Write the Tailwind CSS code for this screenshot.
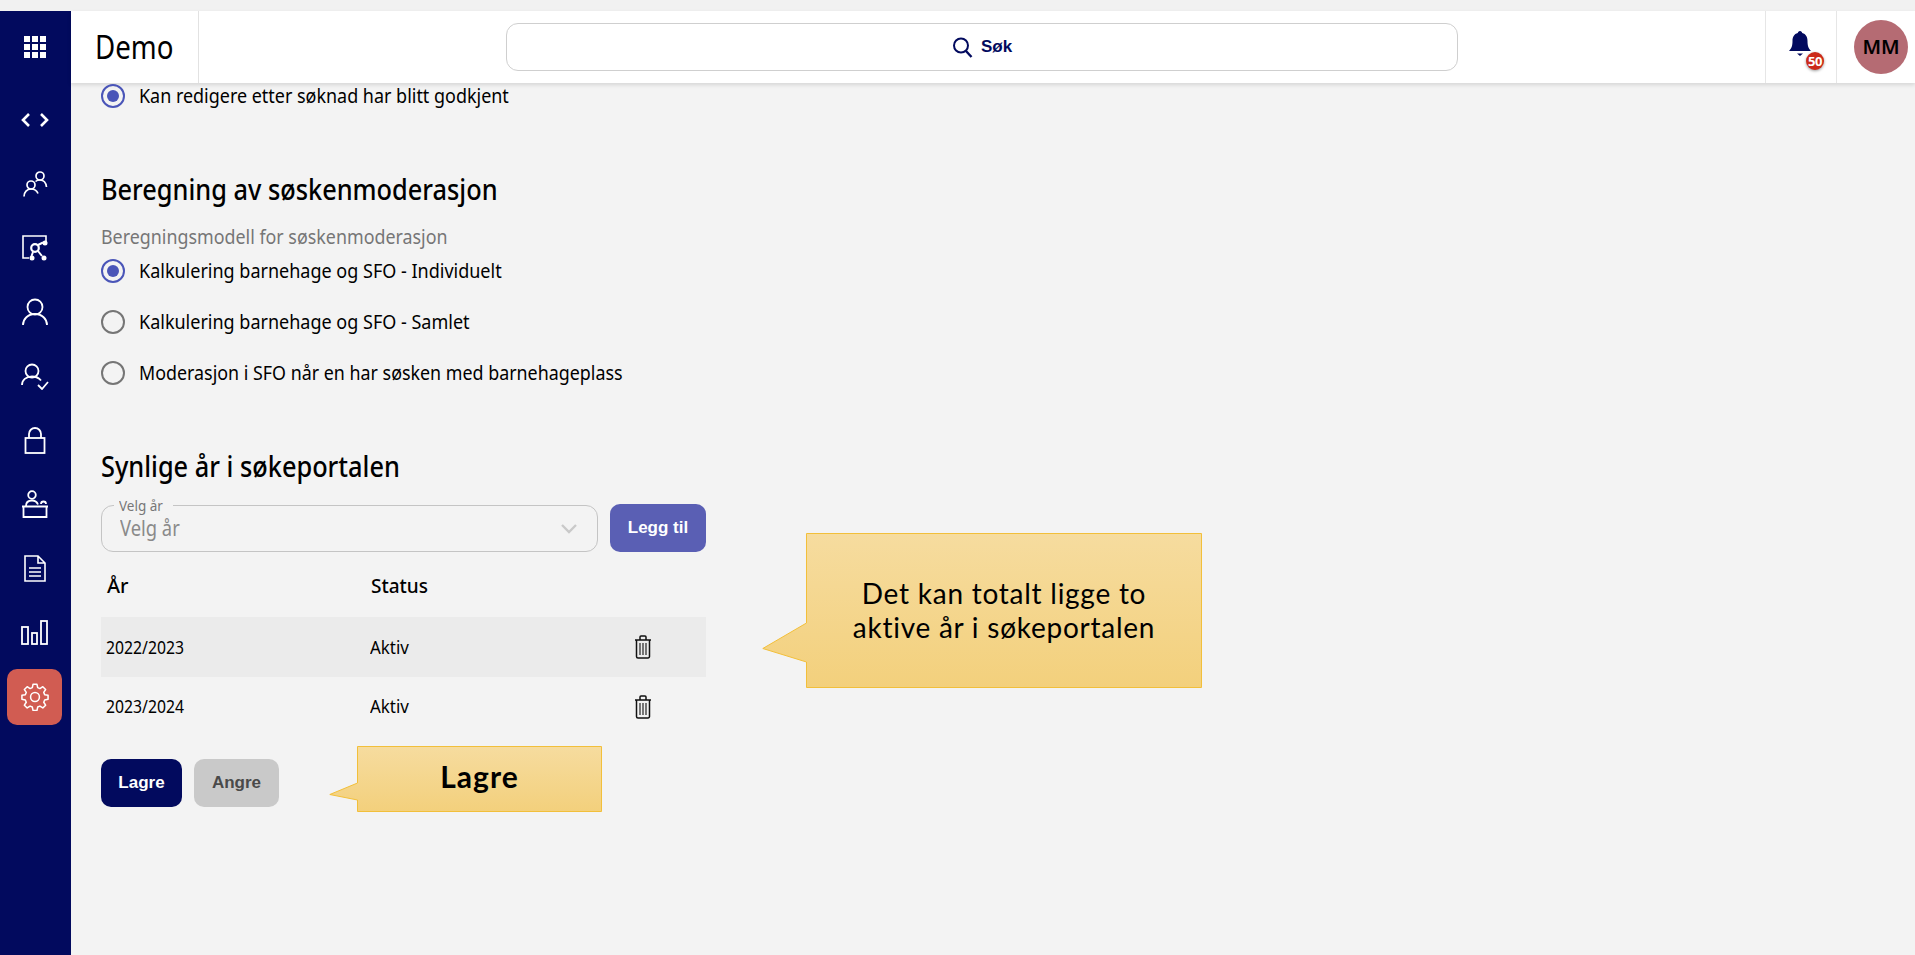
<!DOCTYPE html>
<html lang="no">
<head>
<meta charset="utf-8">
<title>Demo</title>
<script src="https://cdn.jsdelivr.net/npm/@tailwindcss/browser@4"></script>
</head>
<body class="h-[955px] w-[1915px] overflow-hidden bg-[#f3f3f3] font-['Noto_Sans',sans-serif] text-black">
<div class="h-[11px] bg-[#f1f1f1]"></div>
<div class="flex h-[944px]">
  <aside class="flex w-[71px] shrink-0 flex-col items-start bg-[#020a5e] pl-[7px] text-white">
    <div class="flex h-[72px] w-[55px] items-center justify-center">
      <svg width="24" height="24" viewBox="0 0 24 24" fill="#fff"><rect x="1" y="1" width="6" height="6"/><rect x="9" y="1" width="6" height="6"/><rect x="17" y="1" width="6" height="6"/><rect x="1" y="9" width="6" height="6"/><rect x="9" y="9" width="6" height="6"/><rect x="17" y="9" width="6" height="6"/><rect x="1" y="17" width="6" height="6"/><rect x="9" y="17" width="6" height="6"/><rect x="17" y="17" width="6" height="6"/></svg>
    </div>
    <nav class="mt-[5px] flex flex-col items-center">
      <div class="flex h-16 w-[55px] items-center justify-center">
        <svg width="28" height="16" viewBox="0 0 28 16" fill="none" stroke="#fff" stroke-width="2.6"><path d="M8 2 2 8l6 6M20 2l6 6-6 6"/></svg>
      </div>
      <div class="flex h-16 w-[55px] items-center justify-center">
        <svg width="26" height="26" viewBox="0 0 26 26" fill="none" stroke="#fff" stroke-width="1.7"><circle cx="9" cy="14" r="4"/><path d="M2 25.500c0-4.500 3-7.500 7-7.500s6 2 7 4.500"/><circle cx="18" cy="5" r="4"/><path d="M13.500 10.500c1-1 2.500-1.500 4.500-1.500 4 0 6 3 6.500 7"/></svg>
      </div>
      <div class="flex h-16 w-[55px] items-center justify-center">
        <svg width="26" height="26" viewBox="0 0 26 26" fill="none" stroke="#fff" stroke-width="1.6"><path d="M7 23H1V1h23v6"/><circle cx="13" cy="13" r="3.800" stroke-width="2.200"/><path d="m16 10 5-2.500M16 16l4 5M11 17l-1.500 4" stroke-width="2"/><circle cx="23" cy="8" r="2.500" fill="#fff" stroke="none"/><circle cx="22" cy="23" r="2.500" fill="#fff" stroke="none"/><circle cx="10" cy="23" r="2.500" fill="#fff" stroke="none"/></svg>
      </div>
      <div class="flex h-16 w-[55px] items-center justify-center">
        <svg width="26" height="28" viewBox="0 0 26 28" fill="none" stroke="#fff" stroke-width="1.800"><circle cx="13" cy="9" r="7.500"/><path d="M1 27c0-6 5-11 12-11s12 5 12 11"/></svg>
      </div>
      <div class="flex h-16 w-[55px] items-center justify-center">
        <svg width="28" height="27" viewBox="0 0 28 27" fill="none" stroke="#fff" stroke-width="1.800"><circle cx="11" cy="8" r="6.500"/><path d="M1 22c0-5 4-8.500 10-8.500 4 0 7 1.500 9 4"/><path d="m17 22 4 4 6-7"/></svg>
      </div>
      <div class="flex h-16 w-[55px] items-center justify-center">
        <svg width="22" height="27" viewBox="0 0 22 27" fill="none" stroke="#fff" stroke-width="1.800"><rect x="1.500" y="11" width="19" height="15"/><path d="M5 11V7a6 6 0 0 1 12 0v4"/></svg>
      </div>
      <div class="flex h-16 w-[55px] items-center justify-center">
        <svg width="28" height="28" viewBox="0 0 28 28" fill="none" stroke="#fff" stroke-width="1.800"><circle cx="11" cy="5" r="3.800"/><path d="M5 16c0-3.500 2.500-5.500 6-5.500 3 0 5 1.500 6 4"/><path d="M20 14a2.500 2.500 0 0 1 5 0"/><path d="M1 16.500h26M2.500 16.500V27h23V16.500"/></svg>
      </div>
      <div class="flex h-16 w-[55px] items-center justify-center">
        <svg width="22" height="27" viewBox="0 0 22 27" fill="none" stroke="#fff" stroke-width="1.600"><path d="M1 1h13l7 7v18H1zM14 1v7h7"/><path d="M5 13h12M5 17h12M5 21h12"/></svg>
      </div>
      <div class="flex h-16 w-[55px] items-center justify-center">
        <svg width="27" height="25" viewBox="0 0 27 25" fill="none" stroke="#fff" stroke-width="1.800"><rect x="1" y="7" width="6" height="17"/><rect x="11" y="13" width="5" height="11"/><rect x="20" y="1" width="6" height="23"/></svg>
      </div>
      <div class="mt-[5px] flex h-14 w-[55px] items-center justify-center rounded-[10px] bg-[#d15c52]">
        <svg width="28" height="28" viewBox="0 0 24 24" fill="none" stroke="#fff" stroke-width="1.300" stroke-linejoin="round"><path d="M10.300 1.800h3.400l.6 2.900 1.900.8 2.500-1.600 2.400 2.400-1.600 2.500.8 1.900 2.900.6v3.400l-2.900.6-.8 1.900 1.600 2.500-2.400 2.400-2.500-1.600-1.900.8-.6 2.900h-3.400l-.6-2.900-1.900-.8-2.500 1.600-2.400-2.400 1.600-2.500-.8-1.900-2.900-.6v-3.400l2.900-.6.8-1.900-1.600-2.500 2.400-2.400 2.500 1.600 1.900-.8z" transform="translate(0 -.7)"/><circle cx="12" cy="12" r="3.800"/></svg>
      </div>
    </nav>
  </aside>
  <main class="relative min-w-0 flex-1">
    <header class="flex h-[72px] items-stretch bg-white shadow-[0_2px_4px_rgba(0,0,0,0.12)]">
      <div class="flex w-[128px] shrink-0 items-center border-r border-[#e2e2e2] pl-[24px] text-[32px] leading-none"><span class="origin-left scale-x-[0.865]">Demo</span></div>
      <div class="flex min-w-0 flex-1 items-center pl-[307px]">
        <div class="flex h-[48px] w-[952px] shrink-0 items-center justify-center gap-2 rounded-[12px] border border-[#cfcfcf] bg-white font-['Liberation_Sans',sans-serif] text-[17px] font-bold text-[#020a5e]">
          <svg width="21" height="21" viewBox="0 0 21 21" fill="none" stroke="#020a5e" stroke-width="2"><circle cx="9" cy="8.500" r="7"/><path d="m14 14 5.500 6" stroke-width="2.400"/></svg>
          <span>Søk</span>
        </div>
      </div>
      <div class="relative flex w-[72px] shrink-0 items-center justify-center border-x border-[#e6e6e6]">
        <svg class="mb-[4px] mr-[2px]" width="22" height="28" viewBox="0 0 22 28" fill="#020a5e"><path d="M11 0c1.400 0 2 1 2.200 2C17 3 18.500 6 18.500 10c0 5 1 7.500 3.500 10H0c2.500-2.500 3.500-5 3.500-10C3.500 6 5 3 8.800 2 9 1 9.600 0 11 0z"/><path d="M8 22.500h6L11 25z"/></svg>
        <span class="absolute left-[40px] top-[41px] flex h-[18px] w-[18px] items-center justify-center rounded-full bg-[#cc2a1a] text-[13px] font-bold leading-none tracking-[-0.5px] text-white shadow-[0_1px_3px_rgba(0,0,0,0.4)]">50</span>
      </div>
      <div class="flex w-[78px] shrink-0 items-center pl-[17px]">
        <div class="flex h-[54px] w-[54px] items-center justify-center rounded-full bg-[#b56b73] text-[20px] font-semibold">MM</div>
      </div>
    </header>
    <div class="pl-[30px] pt-[1px]">
      <label class="flex h-[24px] items-center gap-[14px] text-[20px]">
        <span class="flex h-6 w-6 items-center justify-center rounded-full border-2 border-[#4a55b8]"><span class="h-3 w-3 rounded-full bg-[#4a55b8]"></span></span>
        <span class="origin-left scale-x-[0.897]">Kan redigere etter søknad har blitt godkjent</span>
      </label>
      <h2 class="mt-[61px] h-[40px] origin-left scale-x-[0.905] text-[28px] font-medium leading-[40px]">Beregning av søskenmoderasjon</h2>
      <p class="mt-[16px] h-[24px] origin-left scale-x-[0.893] text-[20px] leading-[24px] text-[#767676]">Beregningsmodell for søskenmoderasjon</p>
      <div class="mt-[10px] flex flex-col gap-[27px]">
        <label class="flex h-[24px] items-center gap-[14px] text-[20px]">
          <span class="flex h-6 w-6 items-center justify-center rounded-full border-2 border-[#4a55b8]"><span class="h-3 w-3 rounded-full bg-[#4a55b8]"></span></span>
          <span class="origin-left scale-x-90">Kalkulering barnehage og SFO - Individuelt</span>
        </label>
        <label class="flex h-[24px] items-center gap-[14px] text-[20px]">
          <span class="h-6 w-6 rounded-full border-2 border-[#757575]"></span>
          <span class="origin-left scale-x-90">Kalkulering barnehage og SFO - Samlet</span>
        </label>
        <label class="flex h-[24px] items-center gap-[14px] text-[20px]">
          <span class="h-6 w-6 rounded-full border-2 border-[#757575]"></span>
          <span class="origin-left scale-x-[0.893]">Moderasjon i SFO når en har søsken med barnehageplass</span>
        </label>
      </div>
      <h2 class="mt-[61px] h-[40px] origin-left scale-x-[0.905] text-[28px] font-medium leading-[40px]">Synlige år i søkeportalen</h2>
      <div class="mt-[17px] flex w-[605px] items-start gap-[12px]">
        <div class="relative mt-[2px] flex h-[47px] flex-1 items-center justify-between rounded-[12px] border border-[#c4c4c4] pl-[18px] pr-[20px]">
          <span class="absolute -top-[10px] left-[12px] bg-[#f3f3f3] px-[5px] text-[15px] leading-[18px] text-[#777]"><span class="inline-block origin-left scale-x-90">Velg år</span></span>
          <span class="origin-left scale-x-[0.875] text-[21px] text-[#8a8a8a]">Velg år</span>
          <svg width="16" height="10" viewBox="0 0 16 10" fill="none" stroke="#c9c9c9" stroke-width="2.400"><path d="m1 1 7 7 7-7"/></svg>
        </div>
        <button class="mt-[1px] flex h-[48px] w-[96px] items-center justify-center rounded-[10px] bg-[#5a5fb4] font-['Liberation_Sans',sans-serif] text-[17px] font-bold text-white">Legg til</button>
      </div>
      <div class="mt-[3px] w-[605px]">
        <div class="grid h-[62px] grid-cols-[264px_1fr_72px] items-center pl-[6px] text-[20px] font-medium">
          <span>År</span><span class="origin-left scale-x-95">Status</span><span></span>
        </div>
        <div class="grid h-[60px] grid-cols-[264px_1fr_72px] items-center bg-[#ebebeb] pl-[5px] text-[18px]">
          <span class="origin-left scale-x-[0.875]">2022/2023</span><span class="origin-left scale-x-[0.94]">Aktiv</span>
          <svg width="18" height="24" viewBox="0 0 18 24" fill="none" stroke="#111" stroke-width="1.500"><path d="M1 5h16M6 5V2a1 1 0 0 1 1-1h4a1 1 0 0 1 1 1v3"/><path d="M2.500 5v16.500a1.500 1.500 0 0 0 1.500 1.500h10a1.500 1.500 0 0 0 1.500-1.500V5"/><path d="M6 8v12M9 8v12M12 8v12" stroke-width="1.100"/></svg>
        </div>
        <div class="grid h-[59px] grid-cols-[264px_1fr_72px] items-center pl-[5px] text-[18px]">
          <span class="origin-left scale-x-[0.875]">2023/2024</span><span class="origin-left scale-x-[0.94]">Aktiv</span>
          <svg width="18" height="24" viewBox="0 0 18 24" fill="none" stroke="#111" stroke-width="1.500"><path d="M1 5h16M6 5V2a1 1 0 0 1 1-1h4a1 1 0 0 1 1 1v3"/><path d="M2.500 5v16.500a1.500 1.500 0 0 0 1.500 1.500h10a1.500 1.500 0 0 0 1.500-1.500V5"/><path d="M6 8v12M9 8v12M12 8v12" stroke-width="1.100"/></svg>
        </div>
      </div>
      <div class="mt-[23px] flex gap-[12px] font-['Liberation_Sans',sans-serif] text-[17px] font-bold">
        <button class="flex h-[48px] w-[81px] items-center justify-center rounded-[10px] bg-[#020a5e] text-white">Lagre</button>
        <button class="flex h-[48px] w-[85px] items-center justify-center rounded-[10px] bg-[#c9c9c9] text-[#4a4a4a]">Angre</button>
      </div>
    </div>
    <!-- callouts lying over the page -->
    <div class="absolute left-[691px] top-[522px] h-[155px] w-[440px]">
      <svg class="absolute inset-0" width="440" height="155" viewBox="0 0 440 155"><defs><linearGradient id="a" x1="0" y1="0" x2="0" y2="1"><stop offset="0" stop-color="#f6dc9f"/><stop offset="1" stop-color="#f3d07c"/></linearGradient></defs><path d="M44.500.5h395v154h-395V129L.8 115.500 44.500 90z" fill="url(#a)" stroke="#f2bf3a"/></svg>
      <div class="absolute left-[44px] right-0 top-[43px] text-center font-['Lato',sans-serif] text-[28px] leading-[34px] tracking-[0.75px]">Det kan totalt ligge to<br>aktive år i søkeportalen</div>
    </div>
    <div class="absolute left-[258px] top-[735px] h-[66px] w-[273px]">
      <svg class="absolute inset-0" width="273" height="66" viewBox="0 0 273 66"><defs><linearGradient id="b" x1="0" y1="0" x2="0" y2="1"><stop offset="0" stop-color="#f6dc9f"/><stop offset="1" stop-color="#f3d07c"/></linearGradient></defs><path d="M28.500.5h244v65h-244V54L.8 48.500 28.500 37z" fill="url(#b)" stroke="#f2bf3a"/></svg>
      <div class="absolute left-[28px] right-0 top-[13px] text-center font-['Lato',sans-serif] text-[30px] font-bold leading-[34px] tracking-[1px]">Lagre</div>
    </div>
  </main>
</div>
</body>
</html>
